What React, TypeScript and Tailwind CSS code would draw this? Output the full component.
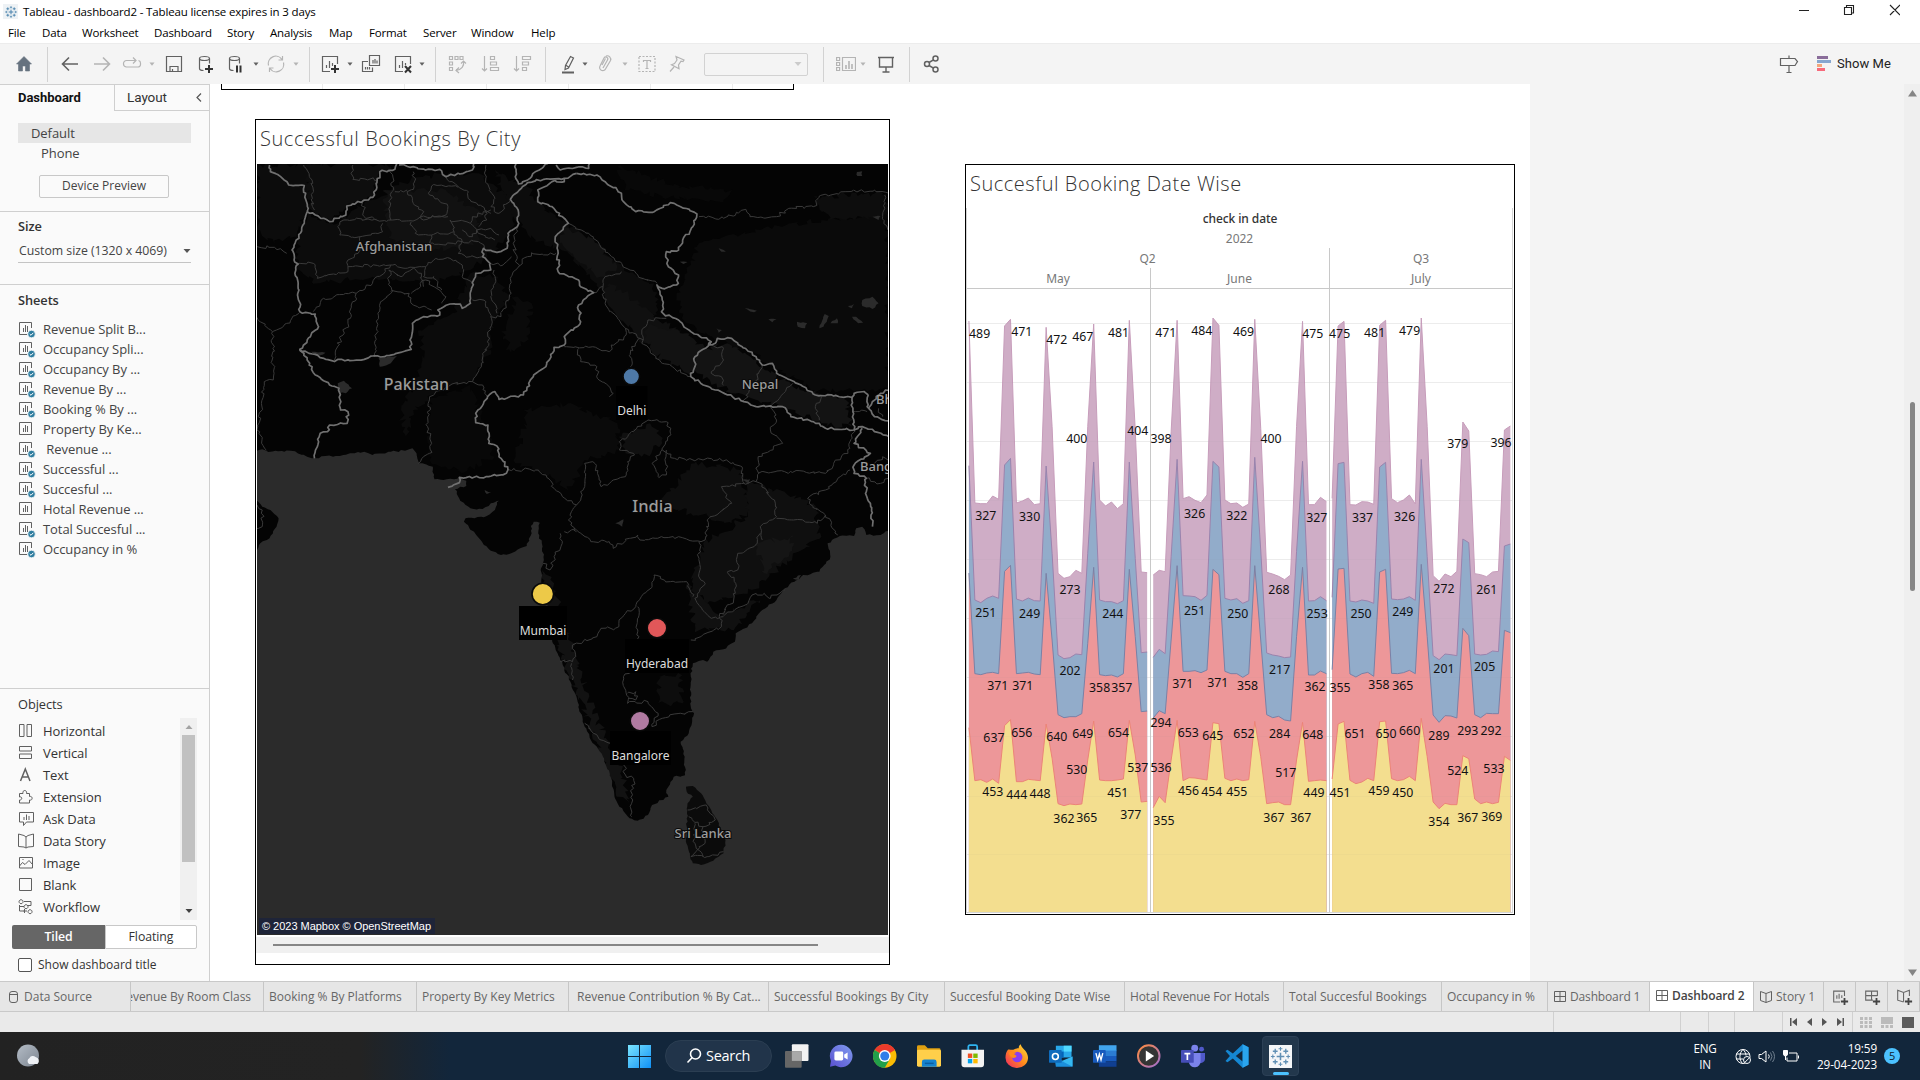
import React from "react";

type P = [number, number];

/* ---------- helpers ---------- */
const parse = (s: string): P[] => s.trim().split(/\s+/).map((q) => q.split(",").map(Number) as P);

/** Adds small deterministic irregularities to a polyline so that it reads as a natural border. */
function rough(s: string, amp: number, close = false): string {
  const pts = parse(s);
  if (close) pts.push(pts[0]);
  let seed = pts.length * 7 + pts[0][0];
  const rnd = () => {
    seed = (seed * 16807 + 11) % 2147483647;
    return (seed % 1000) / 500 - 1;
  };
  let d = `M${pts[0][0]} ${pts[0][1]}`;
  for (let i = 1; i < pts.length; i++) {
    const [ax, ay] = pts[i - 1];
    const [bx, by] = pts[i];
    const n = Math.max(1, Math.round(Math.hypot(bx - ax, by - ay) / 8));
    for (let k = 1; k < n; k++) {
      const t = k / n;
      d += `L${(ax + (bx - ax) * t + rnd() * amp).toFixed(1)} ${(ay + (by - ay) * t + rnd() * amp).toFixed(1)}`;
    }
    d += `L${bx} ${by}`;
  }
  return d;
}

/* ---------- map data ---------- */
const SEA =
  "17,1022 30,1018 45,1026 100,1022 140,1040 158,1045 185,1038 220,1038 245,1030 280,1025 300,1035 345,1025 380,1022 398,1015 408,1030 414,1060 448,1070 452,1108 500,1108 512,1100 530,1112 530,1128 502,1138 515,1172 540,1195 570,1197 590,1180 610,1172 600,1200 580,1218 550,1225 528,1225 524,1235 565,1290 590,1322 615,1335 635,1332 678,1308 690,1270 688,1248 695,1235 710,1238 706,1270 715,1300 720,1350 713,1375 714,1420 720,1450 738,1540 742,1600 760,1650 785,1715 800,1760 815,1835 820,1850 835,1890 850,1910 865,1940 885,2005 893,2060 905,2090 930,2125 950,2132 975,2115 985,2085 1025,2060 1020,2040 1038,2000 1066,1996 1065,1940 1055,1895 1075,1870 1088,1810 1080,1790 1080,1700 1085,1660 1110,1650 1120,1655 1135,1625 1160,1618 1188,1595 1190,1570 1230,1540 1255,1500 1290,1470 1310,1435 1350,1400 1395,1385 1422,1340 1415,1300 1445,1278 1480,1278 1485,1255 1500,1250 1510,1275 1545,1275 1563,1262";
const ARABIA = "10,1160 30,1190 50,1200 70,1225 65,1250 48,1285 25,1300 17,1320 10,1330";
const LANKA =
  "1068,2030 1085,2028 1105,2050 1118,2080 1130,2100 1145,2130 1155,2160 1165,2190 1160,2230 1135,2252 1105,2265 1085,2260 1078,2240 1068,2195 1070,2150 1072,2080 1085,2060 1070,2045";

const COUNTRIES = [
  "48,165 50,185 75,200 95,225 133,227 137,270 140,305 133,340 120,385 103,420 108,450 118,462 110,490 118,520 122,605 160,612 168,650 122,718 140,750 160,795 195,825 218,835 222,900 240,905 238,940 195,945 190,965 172,970 165,1010 158,1045",
  "140,305 160,315 195,335 235,315 237,288 290,270 305,255 318,185 355,178 360,160",
  "365,165 400,170 430,180 465,178 480,200 530,185 545,180 548,160",
  "122,718 200,752 280,748 300,738 330,740 395,718 392,690 398,640 425,620 465,615 460,600 490,582 515,582 520,595 540,580 542,540 553,490 590,480 588,460 570,440 572,415 605,427 630,415 632,370 655,350 657,300 638,268 660,240 680,218 720,208 770,205 800,190",
  "652,160 650,200 658,222 690,200 715,175 730,160",
  "750,165 760,180 800,172 830,175 832,160",
  "800,190 850,195 870,215 910,250 915,275 945,305 990,305 1030,278 1055,290 1095,312 1085,350 1060,390 1050,420 1020,425 1025,470 1050,495 1045,525 1010,535 997,525 1010,570 1012,610 1050,630 1080,665 1130,695 1125,705 1140,700 1145,685 1180,685 1240,740 1255,765 1280,760 1290,790 1350,825 1385,855 1430,858 1475,862 1480,850 1505,845 1515,855",
  "770,205 770,215 740,215 705,240 705,275 740,290 780,340 748,380 755,430 755,485 805,510 810,530 842,548 805,585 810,635 770,680 770,705 745,712 725,770 695,795 670,855 610,868 600,845 582,860 553,910 553,938 583,945 585,1000 605,1008 615,1045 632,1080 628,1090 585,1100 513,1102 513,1118 485,1132",
  "1130,695 1090,740 1090,770 1080,800 1140,840 1210,875 1240,890 1305,890 1325,920 1380,935 1410,955 1480,960 1475,862",
  "1515,855 1512,890 1530,920 1570,938",
  "1480,960 1500,950 1530,965 1570,985",
  "1500,955 1480,1000 1520,1030 1480,1065 1480,1090 1510,1105 1508,1150 1520,1180 1525,1250",
  "1570,835 1545,850 1515,895",
];

const PROVINCES = [
  "132,165 152,210 150,270 158,300",
  "252,165 252,208 312,208",
  "345,180 352,240 340,275 345,330",
  "400,185 402,230 385,245 400,280 420,300 425,330",
  "355,245 385,240",
  "480,200 510,230 535,245 540,270 575,300 590,310",
  "578,165 580,220 600,265 590,290 610,310 638,268",
  "440,255 445,228 510,232",
  "425,330 480,315 485,290 440,255",
  "275,272 280,320 310,330 350,330 395,332 425,318 485,320",
  "215,350 230,330 310,328",
  "215,350 220,375 270,380 325,365 325,340",
  "395,335 405,370 445,375 500,365 490,330",
  "500,365 520,395 560,395 575,415",
  "445,375 440,400 480,405 520,395",
  "270,380 265,430 240,450 240,470 350,465 380,475 430,470 450,450 490,445 520,465",
  "120,460 155,460 165,505 240,485 240,470",
  "345,465 300,520 260,550 180,565 155,605",
  "340,480 345,550 320,575 305,740",
  "345,545 390,550 400,585 445,600",
  "395,550 430,510 480,560 470,580",
  "340,480 370,500 400,475 420,490 425,530",
  "430,470 425,500 450,500 470,540",
  "520,465 520,500 545,520",
  "520,395 510,430 540,440 570,440",
  "260,550 240,640 210,720 207,750",
  "490,330 540,340 560,370 600,390",
  "540,340 545,320 590,300",
  "520,360 545,380 555,360 590,355 610,375",
  "575,300 580,330 560,350",
  "17,410 60,412 90,430",
  "17,622 55,665 90,640 120,610",
  "55,665 57,810 35,815 28,880 17,960 40,1020",
  "655,350 645,400 658,470 690,428 730,435 750,430",
  "658,470 640,500 640,550 615,620 590,620 578,575 545,570",
  "598,480 600,520 590,560 605,610",
  "588,460 620,465 640,440",
  "590,620 585,700 560,780 545,815",
  "545,815 495,822 440,860 435,950 445,1000 440,1030 412,1060",
  "545,815 570,825 582,860",
  "780,340 830,370 900,455 950,495 997,520",
  "910,485 870,500 865,530 842,548",
  "865,530 870,580 920,655 955,685 965,690",
  "1020,625 975,630 960,660 960,700 1010,760 1080,800",
  "770,710 830,712 880,725 885,705 915,690 920,655",
  "955,685 935,710 932,770",
  "805,715 810,755 850,770 855,810 880,830 890,850 880,860",
  "632,1078 700,1080 725,1095 745,1135 800,1185 780,1230 800,1265",
  "800,1185 820,1130 820,1060 840,1055 860,1130 890,1110 920,1100 925,1055 942,1035 905,1020 905,995 975,930 1020,935 1030,970 1010,1020 985,1060 1000,1100 1020,1095 1020,1020",
  "1010,1020 1040,1045 1110,1050 1150,1045 1205,1070 1210,1120 1240,1115 1245,1040 1305,1000 1275,960 1290,930 1275,890",
  "1245,1090 1310,1085 1410,1090 1430,1060 1465,1030 1480,960",
  "1210,1120 1155,1130 1180,1180 1120,1230 1115,1290",
  "1240,1115 1285,1170 1290,1220 1250,1250 1255,1290",
  "1290,1225 1390,1240 1410,1215 1370,1180 1370,1160 1410,1140 1470,1080",
  "1410,1215 1440,1275",
  "770,1265 800,1260 835,1295 880,1295 890,1315 930,1285 950,1275 955,1290 1050,1280 1105,1295 1115,1290",
  "760,1270 765,1300 745,1340 735,1380 718,1360",
  "1100,1295 1100,1390 1115,1420 1090,1465 1130,1525 1160,1520",
  "1250,1270 1235,1310 1195,1330 1195,1380 1170,1385 1190,1420 1185,1470 1150,1520 1155,1550 1080,1590",
  "1160,1515 1220,1480 1230,1455 1260,1450 1275,1465 1310,1440",
  "990,1395 1030,1415 1070,1415 1085,1460",
  "990,1395 985,1430 965,1450 945,1490 920,1510 895,1555 860,1555 850,1580 790,1605 798,1640 790,1655 760,1655",
  "950,1490 950,1560 948,1590 930,1690 915,1700 925,1780 975,1775 1000,1810 985,1850 1010,1825 1085,1805",
  "925,1750 945,1745 945,1770 928,1765",
  "788,1660 790,1710",
  "820,1840 860,1890 885,1900 915,1960 920,1995 940,2005 935,2080 935,2120",
  "1072,2100 1118,2085 1140,2130 1110,2150 1075,2120",
  "1110,2150 1115,2200 1080,2240 1120,2240 1160,2225",
  "1090,2140 1090,2200 1110,2240",
  "1100,320 1160,325 1215,298 1225,320 1290,320 1320,295 1380,290 1395,258 1460,245 1530,240 1570,255",
  "1555,255 1550,320 1563,360",
  "1125,705 1160,715 1160,750 1130,790 1155,800 1160,825",
  "1255,765 1235,820 1210,875",
  "1330,820 1300,860 1275,890",
  "1400,860 1385,890 1395,930",
  "1475,905 1512,905",
  "1540,895 1550,920",
  "17,1185 30,1200 30,1250 17,1255",
  "1510,1105 1545,1120 1563,1105",
  "1530,1060 1550,1040 1563,1050",
];

const TERRAIN: [string, string][] = [
  ["17,165 150,165 140,300 110,380 60,400 17,360", "#0c0c0c"],
  ["140,165 350,165 310,210 300,260 240,290 200,330 145,300", "#0e0e0e"],
  ["140,310 200,340 300,270 400,200 560,190 640,270 650,340 620,400 540,480 420,520 300,500 170,520 120,480 115,400", "#0c0c0c"],
  ["330,240 480,240 560,300 560,400 420,430 340,380", "#111111"],
  ["600,180 680,230 720,300 780,340 900,460 990,520 1000,600 960,670 900,600 850,520 780,430 700,390 650,330", "#0c0c0c"],
  ["770,350 850,400 900,470 860,500 800,450 760,400", "#121212"],
  ["880,520 960,590 1060,680 1040,740 960,700 900,620 860,560", "#101010"],
  ["970,640 1070,670 1120,720 1080,790 1010,750 965,690", "#121212"],
  ["1095,720 1170,700 1240,760 1330,830 1460,870 1475,950 1400,940 1300,890 1180,850 1095,790", "#131313"],
  ["1100,400 1250,360 1400,330 1563,310 1563,840 1500,840 1380,840 1250,740 1130,680 1060,620 1050,540", "#0a0a0a"],
  ["1380,260 1563,250 1563,320 1420,330", "#0d0d0d"],
  ["900,170 980,200 1060,230 1180,240 1160,270 1040,265 930,240", "#080808"],
  ["540,490 600,500 640,560 590,640 590,720 550,800 450,850 400,900 380,980 370,900 420,760 420,660 500,610", "#0b0b0b"],
  ["650,560 690,580 680,680 640,730 620,680", "#0a0a0a"],
  ["440,870 540,830 560,900 580,960 600,1040 520,1090 440,1050", "#080808"],
  ["680,900 780,880 900,940 900,1020 820,1050 780,1140 720,1090 650,1060", "#0a0a0a"],
  ["910,980 980,940 1010,1000 960,1040 920,1030", "#101010"],
  ["1090,1060 1200,1080 1230,1200 1180,1240 1080,1210 1000,1180", "#0e0e0e"],
  ["1210,1110 1280,1140 1380,1180 1400,1280 1300,1370 1230,1440 1120,1480 1080,1440 1110,1300 1220,1220", "#0f0f0f"],
  ["1240,1300 1330,1280 1320,1340 1260,1390", "#151515"],
  ["715,1380 745,1420 770,1540 800,1640 840,1800 900,1950 930,2080 900,2060 850,1900 800,1740 745,1580", "#121212"],
  ["1000,1700 1050,1690 1060,1780 1000,1780", "#0d0d0d"],
  ["1070,1420 1150,1520 1250,1470 1180,1560 1090,1560", "#101010"],
];

const LAKES = [
  "215,820 230,812 250,835 235,850 218,848",
  "315,745 360,738 345,760 318,770",
  "150,725 185,728 165,738",
  "1500,570 1525,560 1540,580 1525,597 1500,588",
  "1465,588 1480,582 1475,595",
  "1340,635 1365,640 1360,655 1342,650",
  "1395,655 1408,612 1418,618 1405,650",
  "1422,640 1438,625 1440,640",
  "1475,620 1485,620 1502,638 1490,640",
  "1212,595 1242,602 1235,607",
  "1270,628 1290,628 1280,637",
  "1143,655 1156,660 1148,668",
  "1487,186 1500,184 1500,198 1488,198",
  "1525,320 1545,318 1540,330",
  "1148,415 1166,425 1155,425",
  "1053,455 1072,456 1062,462",
  "895,1240 915,1228 912,1250",
  "575,1140 592,1148 580,1152",
  "1205,1110 1225,1108 1222,1122",
  "1330,1405 1350,1395 1345,1410",
];

const MAP_LABELS: [string, number, number, string][] = [
  ["Afghanistan", 394, 251, "text-[13.2px]"],
  ["Pakistan", 416.5, 389.5, "text-[16px]"],
  ["Nepal", 760, 389, "text-[13px]"],
  ["India", 652.5, 512, "text-[16.5px]"],
  ["Sri Lanka", 703, 838, "text-[13px]"],
];

const CITIES = [
  { n: "Delhi", x: 631.3, y: 376.5, r: 7.5, c: "#4e79a7", bx: 616, by: 386, bw: 31.5 },
  { n: "Mumbai", x: 542.8, y: 594, r: 10, c: "#edc948", bx: 519, by: 606, bw: 48 },
  { n: "Hyderabad", x: 657, y: 628, r: 9, c: "#e15759", bx: 625, by: 639, bw: 64 },
  { n: "Bangalore", x: 640, y: 721, r: 9, c: "#b07aa1", bx: 610, by: 731, bw: 61 },
];

function IndiaMap() {
  return (
    <svg className="block h-[771px] w-[631px] font-['Noto_Sans',sans-serif]" viewBox="257 164 631 771">
      <rect x="257" y="164" width="631" height="771" fill="#040404" />
      <g transform="matrix(.40816 0 0 .33333 250 110)">
        {TERRAIN.map(([s, c], i) => (
          <path key={i} d={rough(s, 9, true)} fill={c} />
        ))}
        <path d={rough(SEA, 2.5) + "L1575 2480L10 2480L10 1022Z"} fill="#2b2b2b" />
        <path d={rough(ARABIA, 2, true)} fill="#040404" />
        <path d={rough(LANKA, 2, true)} fill="#0b0b0b" />
        {LAKES.map((s, i) => (
          <path key={i} d={rough(s, 2, true)} fill="#2b2b2b" />
        ))}
        {PROVINCES.map((s, i) => (
          <path key={i} d={rough(s, 5)} fill="none" stroke="#3a3a3a" strokeWidth="1" vectorEffect="non-scaling-stroke" />
        ))}
        {COUNTRIES.map((s, i) => (
          <path key={i} d={rough(s, 3.5)} fill="none" stroke="#707070" strokeWidth="1.7" strokeLinejoin="round" vectorEffect="non-scaling-stroke" />
        ))}
      </g>
      {MAP_LABELS.map(([t, x, y, c]) => (
        <text key={t} x={x} y={y} textAnchor="middle" fill="#9c9c9c" stroke="#0a0a0a" strokeWidth="2" paintOrder="stroke" className={c + " font-medium"}>
          {t}
        </text>
      ))}
      <text x="876" y="403.500" fill="#9c9c9c" className="text-[13px] font-medium">Bh</text>
      <text x="860" y="470.500" fill="#9c9c9c" className="text-[13px] font-medium">Bang</text>
      {CITIES.map((c) => (
        <g key={c.n}>
          <rect x={c.bx} y={c.by} width={c.bw} height="34" fill="#000" />
          <circle cx={c.x} cy={c.y} r={c.r + 0.8} fill={c.c} stroke="#0a0a0a" strokeWidth="1.6" />
          <text x={c.bx + c.bw / 2} y={c.by + 29} textAnchor="middle" fill="#dcdcdc" className="text-[12px]">
            {c.n}
          </text>
        </g>
      ))}
      <rect x="259" y="918" width="176" height="16" fill="#1e2438" />
      <text x="262" y="930" fill="#fff" textLength="169" className="font-['Liberation_Sans',sans-serif] text-[11px]">
        © 2023 Mapbox © OpenStreetMap
      </text>
    </svg>
  );
}

/* ---------- area chart data ---------- */
const MONTHS = [
  {
    x0: 25,
    x1: 524,
    s: [
      [483, 1029, 1031, 1031, 1008, 1018, 498, 478, 1029, 1023, 1014, 1034, 1031, 502, 800, 1240, 1255, 1250, 1231, 1240, 800, 492, 1020, 1038, 1026, 1046, 1031, 481, 810, 1236, 1238],
      [917, 1320, 1328, 1315, 1308, 1315, 915, 895, 1317, 1323, 1314, 1322, 1323, 918, 1180, 1485, 1496, 1493, 1482, 1484, 1180, 906, 1320, 1325, 1325, 1331, 1322, 906, 1195, 1478, 1476],
      [1239, 1541, 1544, 1539, 1537, 1541, 1234, 1216, 1541, 1539, 1537, 1542, 1544, 1240, 1440, 1664, 1673, 1670, 1670, 1661, 1450, 1222, 1544, 1547, 1545, 1551, 1541, 1228, 1430, 1655, 1653],
      [1703, 1862, 1859, 1867, 1857, 1870, 1697, 1679, 1865, 1865, 1858, 1860, 1862, 1692, 1795, 1931, 1937, 1932, 1934, 1932, 1800, 1683, 1860, 1862, 1862, 1860, 1857, 1681, 1785, 1926, 1924],
    ],
  },
  {
    x0: 541,
    x1: 1026,
    s: [
      [1245, 1231, 1235, 815, 481, 1016, 1010, 1021, 1028, 1005, 474, 496, 1020, 1031, 1029, 1042, 1032, 478, 805, 1237, 1242, 1249, 1259, 1245, 800, 484, 1034, 1034, 1012, 1025],
      [1492, 1468, 1481, 1190, 898, 1307, 1308, 1310, 1321, 1306, 904, 921, 1315, 1320, 1316, 1330, 1322, 892, 1170, 1479, 1485, 1488, 1493, 1491, 1175, 904, 1323, 1322, 1310, 1322],
      [1674, 1652, 1661, 1440, 1217, 1534, 1534, 1532, 1538, 1530, 1228, 1244, 1534, 1541, 1541, 1552, 1541, 1217, 1440, 1664, 1673, 1669, 1680, 1683, 1430, 1222, 1545, 1545, 1533, 1541],
      [1943, 1909, 1928, 1800, 1681, 1862, 1853, 1854, 1857, 1860, 1688, 1691, 1855, 1862, 1857, 1862, 1859, 1684, 1790, 1931, 1928, 1926, 1934, 1934, 1800, 1687, 1864, 1862, 1860, 1862],
    ],
  },
  {
    x0: 1042,
    x1: 1541,
    s: [
      [1015, 498, 484, 1034, 1035, 1025, 1026, 1033, 496, 481, 1016, 1028, 1020, 1005, 1032, 474, 800, 1247, 1264, 1242, 1250, 1234, 786, 813, 1241, 1244, 1250, 1236, 1234, 810, 798],
      [1312, 911, 907, 1323, 1326, 1320, 1323, 1330, 921, 907, 1317, 1319, 1317, 1310, 1321, 898, 1190, 1487, 1499, 1482, 1484, 1487, 1137, 1148, 1482, 1485, 1483, 1473, 1475, 1158, 1152],
      [1529, 1227, 1225, 1542, 1551, 1541, 1537, 1549, 1236, 1228, 1540, 1541, 1538, 1531, 1541, 1213, 1430, 1665, 1687, 1667, 1668, 1674, 1405, 1427, 1664, 1673, 1660, 1661, 1661, 1411, 1418],
      [1857, 1692, 1684, 1861, 1871, 1866, 1855, 1862, 1685, 1683, 1856, 1862, 1859, 1849, 1862, 1675, 1790, 1926, 1946, 1930, 1934, 1934, 1787, 1796, 1917, 1931, 1926, 1931, 1927, 1789, 1801],
    ],
  },
];
const FILLS = ["#cfadc6", "#92acca", "#ed9799", "#f3de8f"];
const LINES = ["#c79dbb", "#9a83ad", "#7a81a6", "#ec8378"];

/* value, centre x, centre y */
const VALUES =
  "489,55,520 471,173,515 472,271,539 467,344,529 481,444,517 471,576,517 484,677,512 469,794,515 475,988,520 475,1063,520 481,1161,517 479,1259,511 400,327,836 404,498,811 398,563,836 400,871,836 379,1394,850 396,1515,848 327,72,1067 330,195,1070 326,657,1061 322,775,1067 327,999,1073 337,1127,1073 326,1245,1070 273,308,1289 268,893,1289 272,1355,1286 261,1475,1289 251,72,1358 249,195,1361 244,428,1361 251,657,1350 250,778,1361 253,1000,1361 250,1123,1361 249,1240,1355 202,308,1532 217,895,1529 201,1355,1526 205,1469,1520 371,106,1577 371,176,1577 358,391,1583 357,453,1583 371,624,1571 371,722,1568 358,805,1577 362,994,1580 355,1064,1583 358,1173,1574 365,1240,1577 294,563,1688 637,95,1733 656,173,1716 640,271,1730 649,344,1721 654,444,1718 653,639,1718 645,708,1727 652,795,1721 284,895,1721 648,988,1724 651,1106,1721 650,1193,1721 660,1259,1712 289,1341,1727 293,1422,1712 292,1487,1712 530,327,1829 537,498,1823 536,563,1823 517,912,1838 524,1394,1832 533,1495,1826 453,92,1895 444,159,1904 448,224,1901 451,442,1898 456,640,1892 454,705,1895 455,775,1895 449,991,1898 451,1064,1898 459,1173,1892 450,1240,1898 377,478,1964 362,291,1976 365,355,1973 355,571,1982 367,879,1973 367,954,1973 354,1341,1985 367,1422,1973 369,1489,1970";

const GRID = [490, 667, 844, 1021, 1198, 1375, 1552, 1729, 1907, 2083];

const cx = (v: number) => 960 + v / 2.8;
const cy = (v: number) => 160 + v / 3;

function AreaChart() {
  const base = cy(2258);
  return (
    <svg className="block h-[705px] w-[547px] font-['Noto_Sans',sans-serif]" viewBox="966 208 547 705">
      {GRID.map((y) => (
        <path key={y} d={`M967 ${Math.round(cy(y)) + 0.5}H1513`} stroke="#f1f1f1" />
      ))}
      {MONTHS.map((m, mi) => {
        const step = (m.x1 - m.x0) / (m.s[0].length - 1);
        const pt = (v: number, i: number) => `${cx(m.x0 + i * step).toFixed(2)} ${cy(v).toFixed(2)}`;
        return (
          <g key={mi}>
            {m.s.map((row, si) => (
              <path key={si} d={`M${cx(m.x0)} ${base}L${row.map(pt).join("L")}L${cx(m.x1)} ${base}Z`} fill={FILLS[si]} />
            ))}
            {m.s.map((row, si) => (
              <path key={si} d={"M" + row.map(pt).join("L")} fill="none" stroke={LINES[si]} strokeWidth="1" />
            ))}
          </g>
        );
      })}
      {GRID.map((y) => (
        <path key={y} d={`M967 ${Math.round(cy(y)) + 0.5}H1513`} stroke="#888" strokeOpacity=".04" />
      ))}
      <g stroke="#c8c8c8">
        <path d="M967 288.5H1513M1150.5 268V913M1329.5 248V913" />
        <path d="M966.5 208V913M1512.5 208V913M967 912.5H1513" stroke="#d4d4d4" />
      </g>
      <g textAnchor="middle" fill="#787878" className="text-[12px]">
        <text x="1240" y="223" fill="#333" className="font-medium tracking-[-0.1px]">check in date</text>
        <text x="1239.5" y="243">2022</text>
        <text x="1147.5" y="263">Q2</text>
        <text x="1421" y="263">Q3</text>
        <text x="1058" y="283">May</text>
        <text x="1239.5" y="283">June</text>
        <text x="1421" y="283">July</text>
      </g>
      <g textAnchor="middle" fill="#111" className="text-[12.3px]">
        {parse(VALUES).map((q, i) => {
          const [v, x, y] = q as unknown as [number, number, number];
          return (
            <text key={i} x={cx(x)} y={cy(y) + 4.5}>
              {v}
            </text>
          );
        })}
      </g>
    </svg>
  );
}

/* ---------- small icons ---------- */
const I = ({ children, c = "#616161", s = 20, k = "", w = 1.2 }: { children: React.ReactNode; c?: string; s?: number; k?: string; w?: number }) => (
  <svg width={s} height={s} viewBox="0 0 20 20" fill="none" stroke={c} strokeWidth={w} className={"shrink-0 " + k}>
    {children}
  </svg>
);
const Caret = ({ k, c = "#616161" }: { k: string; c?: string }) => (
  <svg width="8" height="8" viewBox="0 0 8 8" className={"shrink-0 " + k}>
    <path d="M1.5 2.5h5L4 5.8z" fill={c} />
  </svg>
);
const WideCaret = ({ c }: { c: string }) => (
  <svg width="8" height="6" viewBox="0 0 8 6" className="shrink-0">
    <path d="M.5 1h7L4 5z" fill={c} />
  </svg>
);
const Sep = ({ k }: { k: string }) => <div className={"h-[35px] w-px shrink-0 bg-[#d2d2d2] " + k} />;
const D = "#b4b4b4";

function Toolbar() {
  return (
    <div className="flex h-[41px] items-center border-t border-[#ececec] bg-[#f4f4f4] pl-[14px]">
      <I>
        <path d="M10 2.5L2.5 10h2v7h4v-5h3v5h4v-7h2z" fill="#66727f" stroke="#66727f" strokeWidth=".6" />
      </I>
      <Sep k="ml-[13px]" />
      <I k="ml-3" w={1.6}><path d="M18 10H3M9 3.5L2.5 10 9 16.5" /></I>
      <I k="ml-3" c={D} w={1.6}><path d="M2 10h15M11 3.5L17.5 10 11 16.5" /></I>
      <I k="ml-2.5" c={D}><path d="M13 13H4.500A3 3 0 0 1 1.500 10v-.5a3 3 0 0 1 3-3h9M11 3.500l3 3-3 3M16.500 6.500a2.500 2.500 0 0 1 2 2.500v1.500A2.500 2.500 0 0 1 16 13h-3" /></I>
      <Caret k="ml-1.5" c={D} />
      <I k="ml-2"><path d="M2.500 2.500h15v15h-15zM6 17.500v-5h8v5M8.500 17.500v-2.500" /></I>
      <I k="ml-3">
        <path d="M3.500 4.500v10c0 1.200 2 2 4 2M13.500 4.500v5" /><ellipse cx="8.500" cy="4.500" rx="5" ry="2" /><path d="M13 11v8M9 15h8" stroke="#333" strokeWidth="2" />
      </I>
      <I k="ml-2.5">
        <path d="M3.500 4.500v10c0 1.200 2 2 4 2M13.500 4.500v5" /><ellipse cx="8.500" cy="4.500" rx="5" ry="2" /><path d="M11 11.500v7M14.500 11.500v7" stroke="#333" strokeWidth="2" />
      </I>
      <Caret k="ml-1.5" />
      <I k="ml-1.5" c={D}><path d="M2.500 11.500A7.500 7.500 0 0 1 16 5.500M17.500 8.500A7.500 7.500 0 0 1 4 14.500M16.500 2v4h-4M3.500 18v-4h4" /></I>
      <Caret k="ml-1.5" c={D} />
      <Sep k="ml-[9px]" />
      <I k="ml-2.5"><path d="M17.500 10V2.500h-15v15H10M6.500 11v3M9.500 7v7M12.500 9v3" /><path d="M15 11v8M11 15h8" stroke="#333" strokeWidth="2" /></I>
      <Caret k="ml-1.5" />
      <I k="ml-[7px]"><path d="M8.500 1.500h10v10h-10zM12 6v3.500M14 5v4.500M16 6.500v3M7 7.500H1.500v10h10V13.500M4.500 13v2.500M6.500 13v2.500M8.500 13v2.500" /></I>
      <I k="ml-3"><path d="M17.500 10V2.500h-15v15H10M6.500 11v3M9.500 7v7M12.500 9v2" /><path d="M12 12l6 6.500M18 12l-6 6.500" stroke="#333" strokeWidth="2" /></I>
      <Caret k="ml-[5px]" />
      <Sep k="ml-[9px]" />
      <I k="ml-[11px]" c={D}><path d="M2.500 2.500h3v3h-3zM8 2.500h3v3H8zM13 2.500h3v3h-3zM2.500 8h3v3h-3zM2.500 13.500h3v3h-3zM16.500 7c1 5-2 9-7.500 9.500M12 13.500l-3 3 3 2.500M14 9.500l2.500-2.500 2.500 2.500" /></I>
      <I k="ml-[13px]" c={D}><path d="M4.500 2v15M2 14.500L4.500 17 7 14.500M10.500 2.500h4v3h-4zM10.500 8h6v3h-6zM10.500 13.500h8v3h-8z" /></I>
      <I k="ml-3" c={D}><path d="M4.500 2v15M2 14.500L4.500 17 7 14.500M10.500 2.500h8v3h-8zM10.500 8h6v3h-6zM10.500 13.500h4v3h-4z" /></I>
      <Sep k="ml-[13px]" />
      <I k="ml-3"><path d="M12.500 2.500l3 1.500-5 10-3.500 1.500.5-4zM7.500 11l3 2" /><path d="M4 18.500h12" strokeWidth="2" /></I>
      <Caret k="ml-[3px]" />
      <I k="ml-1.5" c={D}><path d="M7 11l3.500-6.500M8 14l4.500-8a2 2 0 0 0-3.500-2L5 12a3 3 0 0 0 5.500 3l5-8.500A3.500 3.500 0 0 0 11 2" /></I>
      <Caret k="ml-1.5" c={D} />
      <I k="ml-2" c={D}><path d="M2 2.500h16v15H2z" strokeDasharray="2 1.500" /><path d="M6.500 6.500h7M10 6.500v8M8.500 14.500h3M6.500 6v2M13.500 6v2" /></I>
      <I k="ml-2.5" c={D}><path d="M9 2.500l8 3.500-1 1.500-2-.3-2.500 3.600.5 4-7.500-4 3-1.300L10 6zM7 13l-4 4.500" /></I>
      <div className="ml-[17px] flex h-[23px] w-[104px] items-center justify-end rounded-[2px] border border-[#d2d2d2] pr-[5px]">
        <WideCaret c="#cbcbcb" />
      </div>
      <Sep k="ml-[15px]" />
      <I k="ml-3" c={D}><path d="M.6 3.500h3v3h-3zM.6 8.500h3v3h-3zM.6 13.500h3v3h-3zM6.500 3.500h13v13h-13z" /><path d="M10 15v-4M13 15V7M16 15v-5" strokeWidth="1.600" /></I>
      <Caret k="ml-[3px]" c={D} />
      <I k="ml-[9px]" w={1.4}><path d="M2 3.500h16M3.500 4v9h13V4M10 13v5M6.500 18h7" /></I>
      <Sep k="ml-[13px]" />
      <I k="ml-3" w={1.5}><circle cx="5" cy="10" r="2.500" /><circle cx="13.500" cy="4.500" r="2.500" /><circle cx="13.500" cy="15.500" r="2.500" /><path d="M7 8.500l4.500-2.700M7 11.500l4.500 2.700" /></I>
      <div className="grow" />
      <I><path d="M1.500 4.500h14.500l2.500 3-2.500 4H1.500zM10 1.500v3M10 11.500v7M7.500 18.500h5" /></I>
      <svg width="14" height="16" viewBox="0 0 14 16" className="ml-[18px]">
        <path d="M0 0h11v3H0z" fill="#8a6d9a" /><path d="M0 4h14v3H0z" fill="#86a6cf" /><path d="M0 8h5v3H0z" fill="#f3a77c" /><path d="M0 12h8v3H0z" fill="#f76a7b" />
      </svg>
      <span className="ml-[6px] mr-[29px] w-[54px] whitespace-nowrap font-['Roboto',sans-serif] text-[13px] tracking-[0.05px] text-[#222]">Show Me</span>
    </div>
  );
}

/* ---------- left pane ---------- */
const SHEETS: [string, boolean][] = [
  ["Revenue Split B...", true],
  ["Occupancy Spli...", true],
  ["Occupancy By ...", true],
  ["Revenue By ...", true],
  ["Booking % By ...", true],
  ["Property By Ke...", false],
  ["\u00a0Revenue ...", true],
  ["Successful ...", true],
  ["Succesful ...", true],
  ["Hotal Revenue ...", false],
  ["Total Succesful ...", true],
  ["Occupancy in %", true],
];

const SheetIcon = ({ used }: { used: boolean }) => (
  <svg width="17" height="18" viewBox="0 0 17 18" fill="none" stroke="#616161" className="mr-[7px] shrink-0">
    <path d={used ? "M12.500 8V2.500H.5v12H8" : "M.5 2.500h12v12H.5z"} />
    <path d="M4.500 8v4M6.500 5v7M8.500 6v6" />
    {used && (
      <g>
        <circle cx="12.500" cy="14" r="3.800" fill="#2f7d9f" stroke="#fafafa" strokeWidth=".8" />
        <path d="M10.700 14l1.300 1.300 2.300-2.500" stroke="#fff" />
      </g>
    )}
  </svg>
);

const OBJECTS: [string, React.ReactNode][] = [
  ["Horizontal", <path d="M3.500 3.500h4.500v12H3.500zM11 3.500h4.500v12H11z" />],
  ["Vertical", <path d="M3.500 3.500h12v4.500h-12zM3.500 11h12v4.500h-12z" />],
  ["Text", <path d="M4.500 16L9.300 4 14 16M6 12h6.500" strokeWidth="1.500" />],
  ["Extension", <path d="M3.500 6.500h3.500c-1-4 4.500-4 3.500 0h3v3c3.500-1 3.500 4.500 0 3.500v3H3.500v-3c3 .5 3-4 0-3z" />],
  ["Ask Data", <path d="M3.500 3.500h14v9.500H10.500L7.500 16.500V13h-4zM8 8v3M10.500 5.500v5.500M13 7v4" />],
  ["Data Story", <path d="M2.500 3l5.500 1.500L10 6l2-1.500L17.500 3v12.500l-5.500.5-2 1-2-1-5.500-.5zM10 6v11" />],
  ["Image", <path d="M3.500 4.500h13v10.500h-13zM3.500 13l3-3.500 2.500 2 4-4 3.500 4M6.500 6.500h1" />],
  ["Blank", <path d="M3.500 3.500h12v12h-12z" />],
  ["Workflow", <path d="M8 4.500h7v4h-4M3.500 8v6h4M5 2.700a2 2 0 1 0 .1 0M10 7.700a2 2 0 1 0 .1 0M14 12.700a2 2 0 1 0 .1 0M7 14h4M8.500 12v4M3.500 9.500h4.500" />],
];

function SidePane() {
  return (
    <aside className="flex w-[210px] shrink-0 flex-col border-r border-t border-[#cfcfcf] bg-[#fafafa] font-['Open_Sans',sans-serif] text-[13px] tracking-[-0.07px] text-[#444]">
      <div className="flex h-[26px] shrink-0 font-['Roboto',sans-serif] text-[#333]">
        <div className="flex w-[114px] items-center pl-[18px] text-[13px] font-bold tracking-[-0.02px] text-[#111]">Dashboard</div>
        <div className="flex grow items-center justify-between border-b border-l border-[#cfcfcf] pl-3 pr-[7px] text-[13.500px]">
          Layout
          <svg width="6" height="9" viewBox="0 0 6 9" fill="none" stroke="#555" strokeWidth="1.200"><path d="M5 .5l-4 4 4 4" /></svg>
        </div>
      </div>
      <div className="ml-[18px] mt-3 flex h-5 w-[173px] shrink-0 items-center bg-[#e6e6e6] pl-[13px] pt-px">Default</div>
      <div className="flex h-5 shrink-0 items-center pl-[41px] pt-px">Phone</div>
      <div className="ml-[39px] mt-[12px] flex h-[23px] w-[130px] shrink-0 items-center justify-center rounded-[2px] border border-[#c8c8c8] pb-[2px] text-[12px] tracking-[0]">Device Preview</div>
      <div className="mt-[13px] h-[73px] shrink-0 border-t border-[#cfcfcf] pl-[18px]">
        <div className="mt-[6px] h-[17px] text-[12.800px] font-semibold leading-[17px] text-[#333]">Size</div>
        <div className="mt-[4px] flex h-[24px] w-[173px] items-center justify-between border-b border-[#c4c4c4] text-[12.300px] tracking-[-0.03px]">
          <span className="pl-px pt-px">Custom size (1320 x 4069)</span>
          <WideCaret c="#555" />
        </div>
      </div>
      <div className="shrink-0 border-t border-[#cfcfcf] pl-[18px] pt-px text-[12.800px] font-semibold leading-[28px] text-[#333]">Sheets</div>
      <div className="mt-[5px] flex flex-col pl-[19px]">
        {SHEETS.map(([t, u]) => (
          <div key={t} className="flex h-5 items-center whitespace-nowrap">
            <SheetIcon used={u} />
            <span className="pt-px">{t}</span>
          </div>
        ))}
      </div>
      <div className="grow" />
      <div className="shrink-0 border-t border-[#cfcfcf] pl-[18px] pt-px text-[12.800px] font-medium leading-[28px] text-[#333]">Objects</div>
      <div className="flex h-[202px] shrink-0">
        <div className="flex w-[180px] flex-col pl-[16px] pt-[2px] text-[#333]">
          {OBJECTS.map(([t, ic]) => (
            <div key={t} className="flex h-[22px] items-center">
              <svg width="20" height="20" viewBox="0 0 20 20" fill="none" stroke="#616161" className="mr-[7px] shrink-0">{ic}</svg>
              <span className="pt-px">{t}</span>
            </div>
          ))}
        </div>
        <div className="flex w-[17px] flex-col items-center bg-[#f0f0f0]">
          <svg width="8" height="17" viewBox="0 0 8 17"><path d="M.5 11h7L4 7z" fill="#a3a3a3" /></svg>
          <div className="h-[127px] w-[13px] bg-[#c1c1c1]" />
          <div className="grow" />
          <svg width="8" height="18" viewBox="0 0 8 18"><path d="M.5 7h7L4 11z" fill="#404040" /></svg>
        </div>
      </div>
      <div className="ml-3 mt-[5px] flex h-6 w-[185px] shrink-0 text-[12.300px]">
        <div className="flex w-[93px] items-center justify-center rounded-l-[2px] bg-[#666] font-semibold text-white">Tiled</div>
        <div className="flex grow items-center justify-center rounded-r-[2px] border border-[#c8c8c8] bg-white text-[#333]">Floating</div>
      </div>
      <div className="mb-[9px] ml-[18px] mt-[9px] flex h-[14px] shrink-0 items-center gap-[6px] whitespace-nowrap text-[12px] tracking-[0] text-[#333]">
        <div className="h-[14px] w-[14px] rounded-[2px] border border-[#555] bg-white" />
        Show dashboard title
      </div>
    </aside>
  );
}

/* ---------- sheet tabs ---------- */
const Grid = () => (
  <svg width="12" height="14" viewBox="0 0 12 14" fill="none" stroke="#616161" className="mr-[4px] shrink-0"><path d="M.5 1.500h11v10H.5zM6 1.500v10M.5 6.500h11" /></svg>
);
const Book = () => (
  <svg width="12" height="14" viewBox="0 0 12 14" fill="none" stroke="#616161" className="mr-[4px] shrink-0"><path d="M.5 1.500L6 3.500l5.500-2v9L6 12.500l-5.500-2zM6 3.500v9" /></svg>
);

function Tabs() {
  const t = "flex shrink-0 items-center overflow-hidden whitespace-nowrap border-r border-[#c6c6c6] ";
  return (
    <div className="flex h-[31px] shrink-0 border-b border-t border-[#c9c9c9] bg-[#e6e6e6] font-['Open_Sans',sans-serif] text-[12px] tracking-[0.01px] text-[#666]">
      <div className={t + "w-[131px] pl-[9px]"}>
        <svg width="9" height="12" viewBox="0 0 9 12" fill="none" stroke="#616161" className="mr-[6px]"><rect x=".5" y=".5" width="8" height="11" rx="2.500" /><path d="M.5 3.500h8" /></svg>
        Data Source
      </div>
      <div className={t + "w-[133px] justify-end pr-[12px] tracking-[-0.05px]"}>evenue By Room Class</div>
      <div className={t + "w-[153px] pl-[5px]"}>Booking % By Platforms</div>
      <div className={t + "w-[152px] pl-[5px] tracking-[-0.02px]"}>Property By Key Metrics</div>
      <div className={t + "w-[200px] pl-[8px]"}>Revenue Contribution % By Cat...</div>
      <div className={t + "w-[176px] pl-[5px] tracking-[0.04px]"}>Successful Bookings By City</div>
      <div className={t + "w-[180px] pl-[5px]"}>Succesful Booking Date Wise</div>
      <div className={t + "w-[159px] pl-[5px] tracking-[-0.1px]"}>Hotal Revenue For Hotals</div>
      <div className={t + "w-[158px] pl-[5px]"}>Total Succesful Bookings</div>
      <div className={t + "w-[106px] pl-[5px]"}>Occupancy in %</div>
      <div className={t + "w-[102px] pl-[6px] tracking-[-0.15px]"}><Grid />Dashboard 1</div>
      <div className={t + "w-[104px] bg-white pb-[2px] pl-[6px] font-semibold tracking-[-0.1px] text-[#444]"}><Grid />Dashboard 2</div>
      <div className={t + "w-[70px] pl-[6px]"}><Book />Story 1</div>
      <div className={t + "w-[32px] justify-center"}>
        <I s={18} c="#666"><path d="M15 9V3.500H3v12h7M6.500 8v4M9 6.500V12M12 8v3" /><path d="M15 11v8M11 15h8" stroke="#444" strokeWidth="2" /></I>
      </div>
      <div className={t + "w-[32px] justify-center"}>
        <I s={18} c="#666"><path d="M16 9V3.500H3v10h8M9.500 3.500v10M3 8.500h13" /><path d="M15 11v8M11 15h8" stroke="#444" strokeWidth="2" /></I>
      </div>
      <div className={t + "w-[32px] justify-center"}>
        <I s={18} c="#666"><path d="M16 9V2.500L9.500 5 3 2.500v11l6.500 2M9.500 5v10" /><path d="M15 11v8M11 15h8" stroke="#444" strokeWidth="2" /></I>
      </div>
    </div>
  );
}

function StatusBar() {
  const b = "shrink-0 border-l border-[#d0d0d0] ";
  return (
    <div className="flex h-5 shrink-0 justify-end bg-[#eaeaea]">
      <div className={b + "w-[127px]"} />
      <div className={b + "w-[28px]"} />
      <div className={b + "w-[26px]"} />
      <div className={b + "w-[48px]"} />
      <div className={b + "flex w-[70px] items-center justify-between pl-[7px] pr-[8px]"}>
        <svg width="7" height="8" viewBox="0 0 7 8" fill="#555"><path d="M0 0h1.500v8H0zM7 0v8L2 4z" /></svg>
        <svg width="5" height="8" viewBox="0 0 5 8" fill="#555"><path d="M5 0v8L0 4z" /></svg>
        <svg width="5" height="8" viewBox="0 0 5 8" fill="#555"><path d="M0 0v8l5-4z" /></svg>
        <svg width="7" height="8" viewBox="0 0 7 8" fill="#555"><path d="M5.500 0H7v8H5.500zM0 0v8l5-4z" /></svg>
      </div>
      <div className={b + "flex w-[68px] items-center gap-[9px] pl-[7px]"}>
        <svg width="12" height="11" viewBox="0 0 12 11" fill="#bbb"><path d="M0 0h3v3H0zM4.500 0h3v3h-3zM9 0h3v3H9zM0 4h3v3H0zM4.500 4h3v3h-3zM9 4h3v3H9zM0 8h3v3H0zM4.500 8h3v3h-3zM9 8h3v3H9z" /></svg>
        <svg width="12" height="11" viewBox="0 0 12 11" fill="#bbb"><path d="M0 0h12v7H0zM0 8h3v3H0zM4.500 8h3v3h-3zM9 8h3v3H9z" /></svg>
        <svg width="12" height="11" viewBox="0 0 12 11" fill="#5c5c5c"><path d="M0 0h12v11H0z" /></svg>
      </div>
    </div>
  );
}

/* ---------- Windows task bar ---------- */
const TableauMark = ({ c, s }: { c: string; s: number }) => (
  <svg width={s} height={s} viewBox="0 0 24 24" stroke={c} fill="none">
    <path d="M12 8v8M8 12h8" strokeWidth="1.600" />
    <path d="M12 2v4M10 4h4M12 18v4M10 20h4M2 12h4M4 10v4M18 12h4M20 10v4" strokeWidth="1.100" />
    <path d="M6.500 4v5M4 6.500h5M17.500 4v5M15 6.500h5M6.500 15v5M4 17.500h5M17.500 15v5M15 17.500h5" strokeWidth="1.400" />
  </svg>
);

const APPS: React.ReactNode[] = [
  <g key="view">
    <rect x="7" y="0" width="17" height="17" rx="1" fill="#f2f2f2" />
    <rect x="0" y="7" width="17" height="17" rx="1" fill="#666" />
    <path d="M7 7h10v10H7z" fill="#a9a9a9" />
  </g>,
  <g key="chat">
    <path d="M12.500 0.500a11.500 11.500 0 1 1-6 21.300L1 23l1-6A11.500 11.500 0 0 1 12.500.5z" fill="url(#chat)" />
    <rect x="5.500" y="7.500" width="9" height="9" rx="1.500" fill="#fff" />
    <path d="M15.500 10.500l3.500-2v7l-3.500-2z" fill="#fff" />
  </g>,
  <g key="chrome">
    <circle cx="12" cy="12" r="12" fill="#fbbc04" />
    <path d="M12 12L1.600 6A12 12 0 0 1 22.400 6z" fill="#ea3a2c" />
    <path d="M12 0a12 12 0 0 1 10.400 6H12z" fill="#ea3a2c" />
    <path d="M1.600 6A12 12 0 0 0 12 24l5.200-9L12 12z" fill="#22a04a" />
    <circle cx="12" cy="12" r="6" fill="#fff" />
    <circle cx="12" cy="12" r="4.600" fill="#2f7de9" />
  </g>,
  <g key="files">
    <path d="M0 2.500A1.500 1.500 0 0 1 1.500 1H8l3 3h11.500A1.500 1.500 0 0 1 24 5.500V12H0z" fill="#e0a010" />
    <rect y="5.500" width="24.500" height="17.500" rx="1.500" fill="#ffcf4a" />
    <path d="M5 23v-5a2.500 2.500 0 0 1 2.500-2.500h10A2.500 2.500 0 0 1 20 18v5z" fill="#1583cf" />
    <path d="M8 19.500h9" stroke="#0b5ea0" strokeWidth="1.500" />
  </g>,
  <g key="store">
    <path d="M7.500 6V2.500A1.500 1.500 0 0 1 9 1h6a1.500 1.500 0 0 1 1.500 1.500V6" fill="none" stroke="#2fb4f0" strokeWidth="1.800" />
    <path d="M.5 5.500h23v15a3 3 0 0 1-3 3h-17a3 3 0 0 1-3-3z" fill="#f3f3f3" />
    <path d="M7 9.500h4.500V14H7z" fill="#f25022" /><path d="M12.500 9.500H17V14h-4.500z" fill="#7fba00" /><path d="M7 15h4.500v4.500H7z" fill="#00a4ef" /><path d="M12.500 15H17v4.500h-4.500z" fill="#ffb900" />
  </g>,
  <g key="firefox">
    <path d="M3 5.500C4.500 5 7 6 8.500 5.500 10 4.500 12.500 4 14 4c0-2 .8-3.200 2-4 .5 2.500 2.500 4 4.500 6.500 2 2.500 3 5 3 7.500A11.500 10.500 0 0 1 .5 13.500C.5 10 1.500 7.500 3 5.500z" fill="url(#fox)" />
    <circle cx="12.500" cy="13" r="5.300" fill="#8a3df0" />
    <path d="M4 8c3 1 5-1 8 1-2 0-2.500 1-2.500 1.500C13 11.500 12 14 8.500 14 6 14 4 11 4 8z" fill="#ff8a1c" />
  </g>,
  <g key="outlook">
    <path d="M7 1.500h16v12H7z" fill="#28a8ea" /><path d="M15 1.500h8v6h-8z" fill="#50d9ff" /><path d="M7 7.500h8v6H7z" fill="#0364b8" />
    <path d="M5.500 12.500l9.500 5 9-5V22a1 1 0 0 1-1 1H7z" fill="#1b8fdc" /><path d="M24 12.500V23L13 17z" fill="#35b8f1" />
    <rect y="6" width="13" height="13" rx="1" fill="#0f6cbd" />
    <circle cx="6.500" cy="12.500" r="3" fill="none" stroke="#fff" strokeWidth="1.600" />
  </g>,
  <g key="word">
    <path d="M6 1h18v6H6z" fill="#41a5ee" /><path d="M6 6.500h18V12H6z" fill="#2b7cd3" /><path d="M6 12h18v5.500H6z" fill="#185abd" /><path d="M6 17.500h18V23H6z" fill="#103f91" />
    <rect y="6" width="13" height="13" rx="1" fill="#185abd" />
    <path d="M3 9l1.800 7L6.500 10l1.700 6L10 9" fill="none" stroke="#fff" strokeWidth="1.400" />
  </g>,
  <g key="media">
    <circle cx="12" cy="12" r="11" fill="#343434" stroke="url(#ring)" strokeWidth="2" />
    <path d="M9 6.500l8.500 5.500L9 17.500z" fill="#fff" />
  </g>,
  <g key="teams">
    <circle cx="14" cy="4" r="3.500" fill="#7b83eb" /><circle cx="21" cy="5" r="2.500" fill="#5059c9" />
    <path d="M16 9h8.500v6a4.500 4.500 0 0 1-6 4z" fill="#5059c9" /><path d="M8 9h12v8a6 6 0 0 1-12 1z" fill="#7b83eb" />
    <rect y="6" width="13" height="13" rx="1" fill="#464eb8" />
    <path d="M3.500 9.500h6M6.500 9.500V16" stroke="#fff" strokeWidth="1.700" />
  </g>,
  <g key="code">
    <path d="M18 0l6 3v18l-6 3L8 14.500 2.500 18.500.5 17l4.500-5-4.500-5L2.500 5.500 8 9.500zM18 6.500L11 12l7 5.500z" fill="#1587d2" fillRule="evenodd" />
    <path d="M18 0l6 3v18l-6 3z" fill="#2aa5ee" />
  </g>,
];

function TaskBar() {
  return (
    <div className="flex h-12 shrink-0 items-center bg-[linear-gradient(90deg,#222222_0,#232323_360px,#12263b_450px,#12263b_100%)] font-['Open_Sans',sans-serif] text-white">
      <svg width="0" height="0">
        <linearGradient id="chat" x1="0" y1="1" x2="1" y2="0"><stop offset="0" stopColor="#5a4fcf" /><stop offset="1" stopColor="#7f9cf0" /></linearGradient>
        <linearGradient id="fox" x1="1" y1="0" x2="0" y2="1"><stop offset="0" stopColor="#ffe13a" /><stop offset=".5" stopColor="#ff8a1c" /><stop offset="1" stopColor="#f0206a" /></linearGradient>
        <linearGradient id="ring" x1="0" y1="0" x2="1" y2="1"><stop offset="0" stopColor="#ff8b3d" /><stop offset="1" stopColor="#a06fd0" /></linearGradient>
        <linearGradient id="win" x1="0" y1="0" x2="1" y2="1"><stop offset="0" stopColor="#7ae5ff" /><stop offset="1" stopColor="#1090f5" /></linearGradient>
        <linearGradient id="moon" x1="0" y1="0" x2="1" y2="1"><stop offset="0" stopColor="#b4bcc6" /><stop offset="1" stopColor="#7d8691" /></linearGradient>
      </svg>
      <svg width="24" height="24" viewBox="0 0 24 24" className="ml-[17px]">
        <circle cx="11" cy="11.500" r="11" fill="url(#moon)" />
        <path d="M12 20a3.500 3.500 0 0 1 .5-6 4 4 0 0 1 6-1 4 4 0 0 1 2 7z" fill="#eef1f5" />
      </svg>
      <svg width="23" height="23" viewBox="0 0 23 23" className="ml-[587px]">
        <path d="M0 0h11v11H0zM12 0h11v11H12zM0 12h11v11H0zM12 12h11v11H12z" fill="url(#win)" />
      </svg>
      <div className="ml-[14px] flex h-8 w-[107px] items-center rounded-full border border-[#2b3e52] bg-[#21344a] pl-[20px]">
        <svg width="16" height="16" viewBox="0 0 16 16" fill="none" stroke="#fff" strokeWidth="1.600"><circle cx="9.500" cy="6" r="5" /><path d="M6 9.800L1.500 14.500" /></svg>
        <span className="ml-1 text-[14.500px] tracking-[-0.3px]">Search</span>
      </div>
      <div className="ml-[3px] flex">
        {APPS.map((a, i) => (
          <div key={i} className="flex h-10 w-[44px] items-center justify-center">
            <svg width="24" height="24" viewBox="0 0 24.500 24">{a}</svg>
          </div>
        ))}
        <div className="ml-[3px] flex h-10 w-[37px] flex-col items-center rounded border border-[#2c4056] bg-[#22374c] pt-[8px]">
          <div className="h-[23px] w-[23px] bg-[#f4f6f8]"><TableauMark c="#5f8fb4" s={23} /></div>
          <div className="mt-[4px] h-[3px] w-4 shrink-0 rounded-full bg-[#4cc2ff]" />
        </div>
      </div>
      <div className="ml-auto mr-[20px] flex items-center whitespace-nowrap text-[11.700px] leading-4 tracking-[-0.1px]">
        <div className="w-[26px] text-center tracking-[-0.3px]">ENG<br />IN</div>
        <svg width="17" height="17" viewBox="0 0 17 17" fill="none" stroke="#fff" className="ml-[17px]">
          <circle cx="8" cy="8.500" r="7" /><path d="M1 6h14M1 11h7M8 1.500C4 5 4 12 7.500 15.500M8 1.500c2 2 3 4 3 6" /><circle cx="12" cy="12" r="3.500" fill="#12263b" /><path d="M9.700 14.500l4.800-4.800" />
        </svg>
        <svg width="17" height="17" viewBox="0 0 17 17" fill="none" stroke="#fff" className="ml-[6px]">
          <path d="M1 6.500h2.500L8 3v11L3.500 10.500H1zM10.500 6.500q1.500 2 0 4" /><path d="M12.500 4.500q3 4 0 8M14.500 3q4 5.500 0 11" stroke="#71808f" />
        </svg>
        <svg width="18" height="17" viewBox="0 0 18 17" fill="none" stroke="#fff" className="ml-[7px]">
          <path d="M7 5h8v8H5V9.500M16.500 7.500v3" /><path d="M1.500 2.500h4V6a2 2 0 0 1-4 0zM3.500 8v4" fill="#fff" />
        </svg>
        <div className="ml-[11px] w-[66px] text-right">19:59<br />29-04-2023</div>
        <div className="ml-[7px] flex h-4 w-4 items-center justify-center rounded-full bg-[#4cc2ff] text-[11px] text-[#10202e]">5</div>
      </div>
    </div>
  );
}

/* ---------- page ---------- */
export default function App() {
  const menu = "shrink-0";
  return (
    <div className="flex h-[1080px] w-[1920px] flex-col overflow-hidden bg-white">
      <header className="h-[43px] shrink-0 font-['Open_Sans',sans-serif] text-[11.500px] tracking-[-0.15px] text-black">
        <div className="flex h-[23px] items-center">
          <div className="ml-[3px] flex h-[15px] w-[15px] items-center justify-center bg-[#eef2f5]"><TableauMark c="#3f7ca8" s={14} /></div>
          <span className="ml-[5px] grow whitespace-nowrap">Tableau - dashboard2 - Tableau license expires in 3 days</span>
          <svg width="102" height="12" viewBox="0 0 102 12" fill="none" stroke="#222" strokeWidth="1.100" className="mb-[3px] mr-[20px]">
            <path d="M1 6.500h10M46.500 3.500h7v7h-7zM48.500 3.500v-2h7v7.500h-2M92 1l10 10M102 1L92 11" />
          </svg>
        </div>
        <nav className="flex h-[20px] items-center whitespace-nowrap pl-2">
          <span className={menu + " w-[34px]"}>File</span>
          <span className={menu + " w-[40px]"}>Data</span>
          <span className={menu + " w-[72px]"}>Worksheet</span>
          <span className={menu + " w-[73px]"}>Dashboard</span>
          <span className={menu + " w-[43px]"}>Story</span>
          <span className={menu + " w-[59px]"}>Analysis</span>
          <span className={menu + " w-[40px]"}>Map</span>
          <span className={menu + " w-[54px]"}>Format</span>
          <span className={menu + " w-[48px]"}>Server</span>
          <span className={menu + " w-[60px]"}>Window</span>
          <span>Help</span>
        </nav>
      </header>
      <Toolbar />
      <div className="flex h-[897px] shrink-0">
        <SidePane />
        <main className="w-[1320px] shrink-0 bg-white pl-[11px]">
          <div className="flex h-[6px] w-[573px] gap-[81px] border-x border-b border-black pl-[100px]">
            {[0, 1, 2, 3, 4, 5].map((i) => (
              <div key={i} className="h-full w-px bg-[#ebebeb]" />
            ))}
          </div>
          <div className="flex items-start pl-[34px] pt-[29px]">
            <section className="h-[846px] w-[635px] border border-black">
              <h2 className="h-[44px] pl-[4px] font-['Open_Sans',sans-serif] text-[20px] font-light leading-[38px] tracking-[0.57px] text-[#333]">Successful Bookings By City</h2>
              <div className="pl-px"><IndiaMap /></div>
              <div className="mt-[2px] h-[16px] bg-[#f0f0f0] pl-[17px] pt-[7px]">
                <div className="h-[2px] w-[545px] bg-[#868686]" />
              </div>
            </section>
            <section className="ml-[75px] mt-[45px] h-[751px] w-[550px] border border-black">
              <h2 className="h-[43px] pl-[4px] font-['Open_Sans',sans-serif] text-[20px] font-light leading-[38px] tracking-[0.53px] text-[#333]">Succesful Booking Date Wise</h2>
              <AreaChart />
            </section>
          </div>
        </main>
        <div className="grow bg-[#f4f4f4]" />
        <div className="flex w-4 flex-col items-center bg-[#efefef]">
          <svg width="9" height="7" viewBox="0 0 9 7" className="mt-[6px]"><path d="M0 6.500h9L4.500 0z" fill="#858585" /></svg>
          <div className="mt-[305px] h-[189px] w-[5px] rounded-full bg-[#868686]" />
          <div className="grow" />
          <svg width="9" height="7" viewBox="0 0 9 7" className="mb-[5px]"><path d="M0 .5h9L4.500 7z" fill="#858585" /></svg>
        </div>
      </div>
      <Tabs />
      <StatusBar />
      <TaskBar />
    </div>
  );
}
